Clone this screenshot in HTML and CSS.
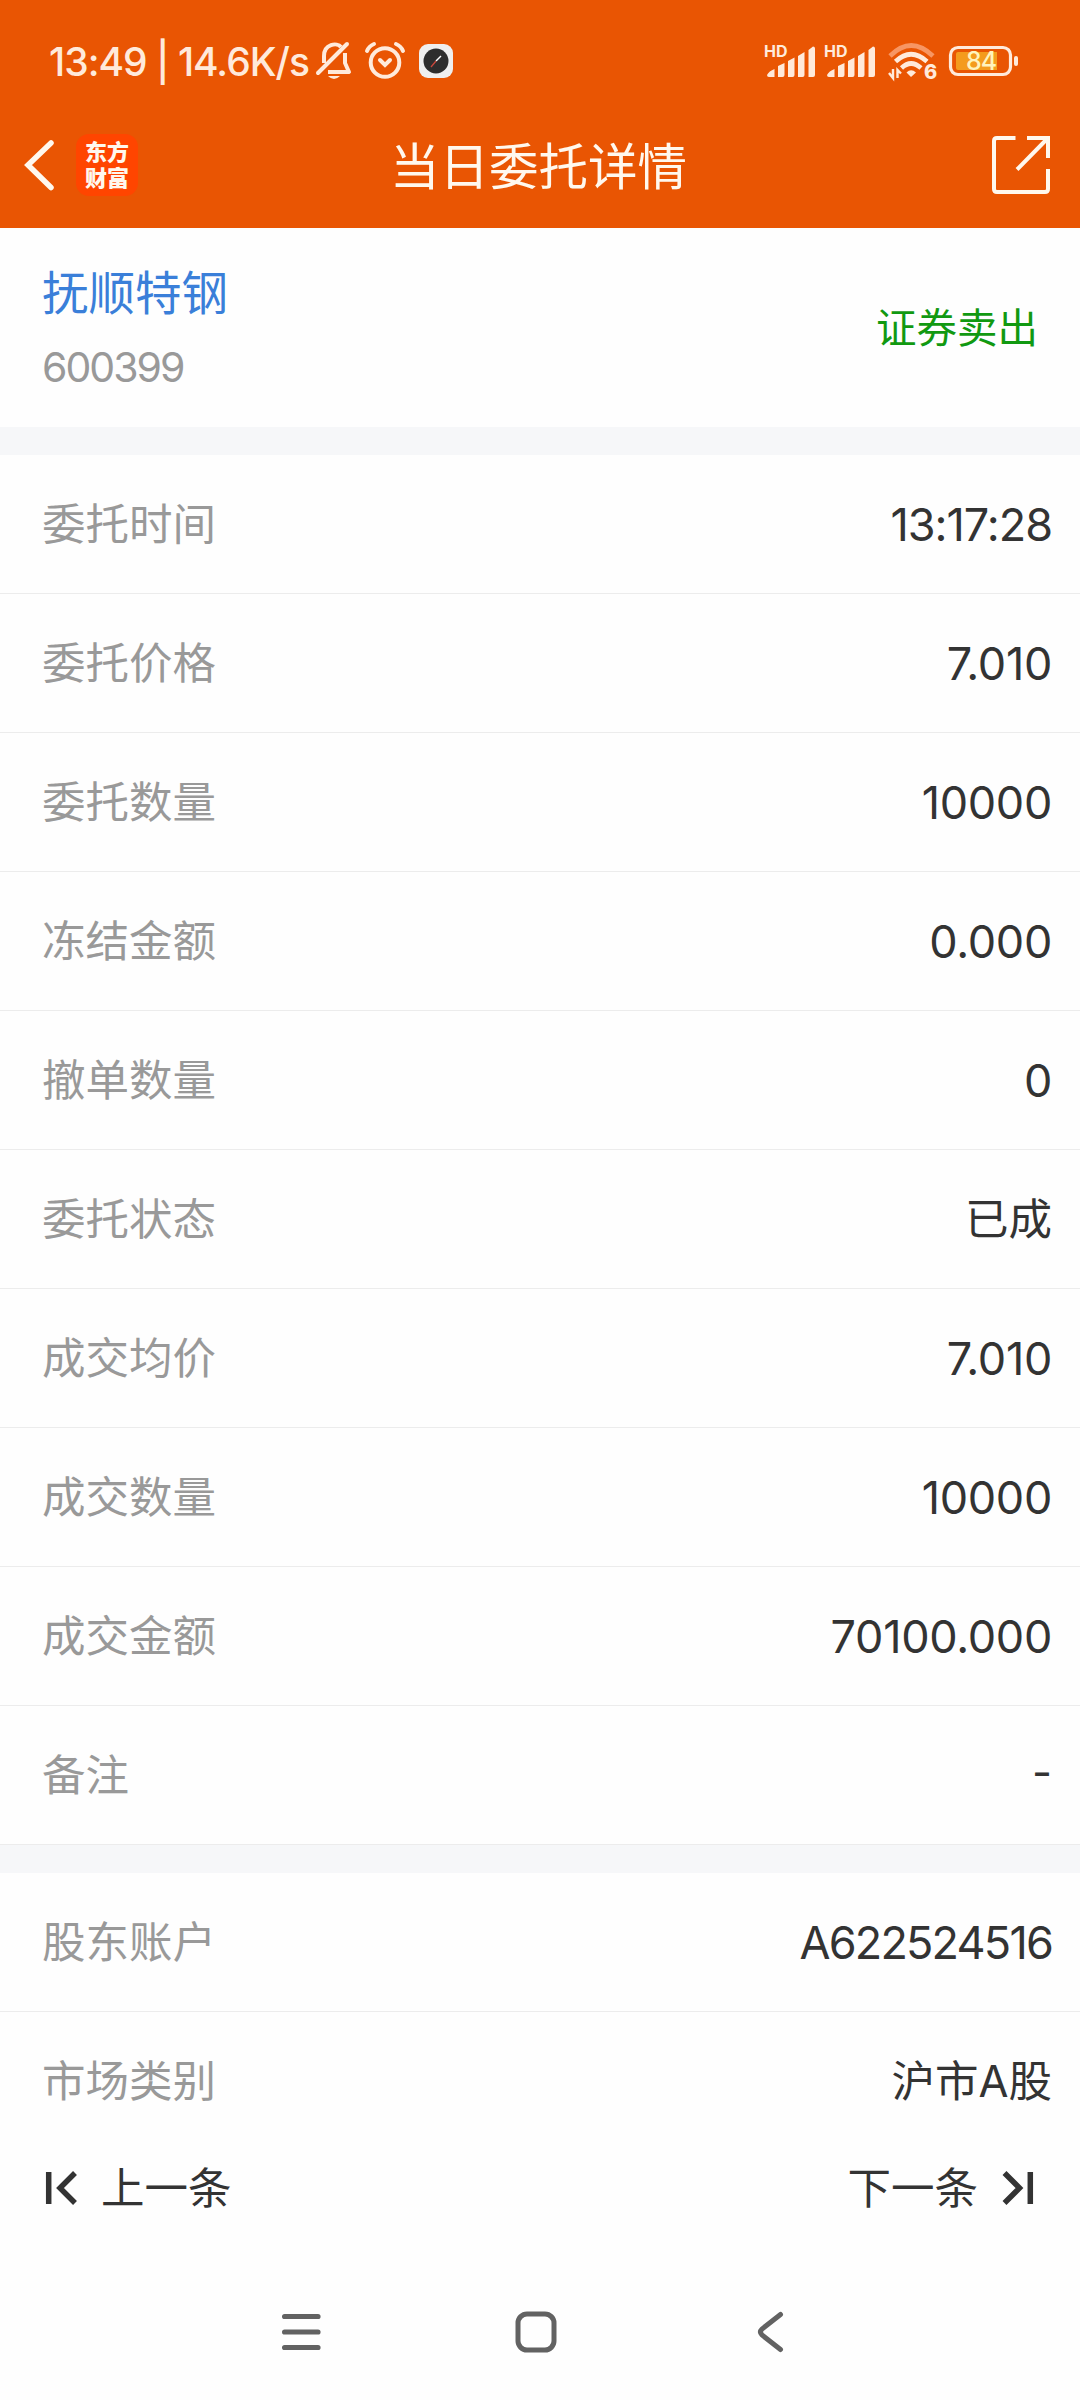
FILE: index.html
```html
<!DOCTYPE html>
<html lang="zh-CN">
<head>
    <meta charset="UTF-8">
    <meta name="viewport" content="width=device-width, initial-scale=1.0">
    <title>当日委托详情</title>
    <link rel="stylesheet" href="styles.css">
</head>
<body>
    <header class="header">
        <div class="status-bar">
            <span class="status-text">13:49 | 14.6K/s</span>
            <svg class="bell" width="36" height="38" viewBox="0 0 36 38" fill="none" stroke="#ffeadb" stroke-width="4">
                <path d="M8 21V14C8 2 21 0 25 5M29 11V21L33 30H12" stroke-linejoin="round"/>
                <path d="M2 31L31 2" stroke-linecap="round"/>
                <path d="M12 34H24Q18 40 12 34Z" fill="#ffeadb" stroke="none"/>
            </svg>
            <svg class="alarm" width="40" height="38" viewBox="0 0 40 38" fill="none" stroke="#ffeadb" stroke-width="4" stroke-linecap="round">
                <circle cx="20" cy="20.500" r="14.300"/>
                <path d="M2 9Q4 4 9 2M31 2Q36 4 38 9M15 18L20 23L25 18"/>
            </svg>
            <svg class="compass" width="34" height="34" viewBox="0 0 34 34">
                <rect width="34" height="34" rx="9" fill="#efefef"/>
                <circle cx="17" cy="17" r="12.500" fill="#2d2d2d"/>
                <path d="M17 17L22 12" stroke="#fff" stroke-width="1.500"/>
                <path d="M17 17L12 23" stroke="#c9473c" stroke-width="1.300"/>
            </svg>
            <div class="status-right">
                <svg class="signal" width="50" height="34" viewBox="0 0 50 34" fill="#ffeadb">
                    <text x="-1" y="13">HD</text>
                    <path d="M2 31Q4 27 9.500 25V33H4Q2 33 2 31ZM13 22L19.500 19V31Q19.500 33 17.500 33H13ZM23 17L29.500 13.500V31Q29.500 33 27.500 33H23ZM33 12L39.500 8V31Q39.500 33 37.500 33H33ZM43.500 6L48 2.500Q50 2.500 50 4.500V31Q50 33 48 33H43.500Z"/>
                </svg>
                <svg class="signal" width="50" height="34" viewBox="0 0 50 34" fill="#ffeadb">
                    <text x="-1" y="13">HD</text>
                    <path d="M2 31Q4 27 9.500 25V33H4Q2 33 2 31ZM13 22L19.500 19V31Q19.500 33 17.500 33H13ZM23 17L29.500 13.500V31Q29.500 33 27.500 33H23ZM33 12L39.500 8V31Q39.500 33 37.500 33H33ZM43.500 6L48 2.500Q50 2.500 50 4.500V31Q50 33 48 33H43.500Z"/>
                </svg>
                <svg class="wifi" width="48" height="36" viewBox="0 0 48 36" fill="none" stroke="#ffeadb" stroke-width="4.600">
                    <path d="M2 13Q23 -8 45 13" stroke="#f79663"/>
                    <path d="M7.500 18.500Q23 4 39 18.500M13.500 25Q23 16 33 25"/>
                    <path d="M18.500 29.500Q23 25 28 29.500L23 34Z" fill="#ffeadb" stroke="none"/>
                    <path d="M5 26V35L1 30M9.500 35V27L13 30.500" stroke-width="2.400"/>
                    <text x="36" y="35.500" fill="#ffeadb" stroke="none">6</text>
                </svg>
                <svg class="battery" width="70" height="32" viewBox="0 0 70 32">
                    <rect x="1.500" y="2.500" width="60" height="27" rx="7.500" fill="none" stroke="#ffeadb" stroke-width="3.200"/>
                    <path d="M9 7H48V25H9Q7 25 7 23V9Q7 7 9 7Z" fill="#f49b1d"/>
                    <rect x="65" y="11" width="4" height="10" rx="2" fill="#ffeadb"/>
                    <text x="17" y="25" fill="#fff3bd">84</text>
                </svg>
            </div>
        </div>
        <div class="title-bar">
            <div class="title-left">
                <svg width="30" height="50" viewBox="0 0 30 50" fill="none" stroke="#fff8ee" stroke-width="5.500" stroke-linecap="round">
                    <path d="M26 3L3 25L26 47.500"/>
                </svg>
                <div class="logo">东方<br>财富</div>
            </div>
            <h1>当日委托详情</h1>
            <svg class="share" width="58" height="58" viewBox="0 0 58 58" fill="none" stroke="#fff8ee" stroke-width="4">
                <path d="M23.500 2H5Q2 2 2 5V53Q2 56 5 56H53Q56 56 56 53V33M35 2H56V22M25 33.500L55 3"/>
            </svg>
        </div>
    </header>

    <section class="stock">
        <div>
            <div class="stock-name">抚顺特钢</div>
            <div class="stock-code">600399</div>
        </div>
        <div class="side">证券卖出</div>
    </section>

    <section class="list">
        <div class="row"><span>委托时间</span><b class="time">13:17:28</b></div>
        <div class="row"><span>委托价格</span><b>7.010</b></div>
        <div class="row"><span>委托数量</span><b>10000</b></div>
        <div class="row"><span>冻结金额</span><b>0.000</b></div>
        <div class="row"><span>撤单数量</span><b>0</b></div>
        <div class="row"><span>委托状态</span><b class="text">已成</b></div>
        <div class="row"><span>成交均价</span><b>7.010</b></div>
        <div class="row"><span>成交数量</span><b>10000</b></div>
        <div class="row"><span>成交金额</span><b>70100.000</b></div>
        <div class="row"><span>备注</span><b class="text">-</b></div>
    </section>

    <section class="list">
        <div class="row"><span>股东账户</span><b class="account">A622524516</b></div>
        <div class="row"><span>市场类别</span><b class="text">沪市A股</b></div>
    </section>

    <div class="pager">
        <div class="pager-item">
            <svg width="32" height="34" viewBox="0 0 32 34" fill="none" stroke="#333" stroke-width="5.500">
                <path d="M3.700 1V33M30 2L15 17L30 32"/>
            </svg>
            <span>上一条</span>
        </div>
        <div class="pager-item">
            <span>下一条</span>
            <svg width="32" height="34" viewBox="0 0 32 34" fill="none" stroke="#333" stroke-width="5.500">
                <path d="M28.300 1V33M2.500 2L17.500 17L2.500 32"/>
            </svg>
        </div>
    </div>

    <nav class="system-nav">
        <svg width="42" height="42" viewBox="0 0 42 42" fill="none" stroke="#626262" stroke-width="5.200" stroke-linecap="round">
            <path d="M4.600 5.500H38M4.600 21H38M4.600 36.500H38"/>
        </svg>
        <svg width="42" height="42" viewBox="0 0 42 42" fill="none" stroke="#626262" stroke-width="5">
            <rect x="3" y="3" width="36" height="36" rx="9"/>
        </svg>
        <svg width="42" height="42" viewBox="0 0 42 42" fill="none" stroke="#626262" stroke-width="5" stroke-linecap="round">
            <path d="M30.500 3.500L12 18Q9 21 12 24L30.500 38.500"/>
        </svg>
    </nav>
</body>
</html>
```

FILE: styles.css
```css
* {
    box-sizing: border-box;
}
body {
    margin: 0;
    height: 2400px;
    background: #fefefe;
    color: #333;
    font-family: Inter, "Noto Sans CJK SC", sans-serif;
    font-size: 44px;
    overflow: hidden;
}
svg {
    display: block;
    flex: none;
    overflow: visible;
}
.header {
    height: 228px;
    background: #e95503;
    color: #fff8ee;
}
.status-bar {
    display: flex;
    align-items: center;
    height: 122px;
    padding: 0 61px 0 49px;
}
.status-text {
    width: 267px;
    color: #ffeadb;
    font-size: 39px;
    font-weight: 500;
    letter-spacing: -1px;
    white-space: nowrap;
}
.alarm {
    margin-left: 13px;
}
.compass {
    margin-left: 14px;
}
.status-right {
    display: flex;
    align-items: center;
    margin-left: auto;
}
.signal {
    margin-right: 10px;
    font-size: 16px;
    font-weight: 700;
}
.wifi {
    margin: 0 13px 0 3px;
    font-size: 20px;
    font-weight: 800;
}
.battery {
    font-size: 25px;
    font-weight: 500;
    letter-spacing: -1px;
}
.title-bar {
    display: flex;
    align-items: center;
    justify-content: space-between;
    height: 86px;
    padding: 0 30px 0 25px;
}
.title-left {
    display: flex;
    align-items: center;
    gap: 21px;
    width: 170px;
}
.logo {
    width: 62px;
    height: 62px;
    padding: 5px 0;
    border-radius: 13px;
    background: #ff4500;
    font-size: 22px;
    font-weight: 900;
    line-height: 26px;
    text-align: center;
}
h1 {
    margin: 0;
    padding-top: 3px;
    font-size: 49.500px;
    font-weight: 400;
    line-height: 60px;
}
.share {
    margin-left: 110px;
}
.stock {
    display: flex;
    align-items: center;
    justify-content: space-between;
    height: 199px;
    padding: 0 42px 0 42px;
}
.stock-name {
    padding-top: 5px;
    color: #3a7fd9;
    font-size: 46.500px;
    line-height: 70px;
}
.stock-code {
    margin-top: 4px;
    color: #999;
    font-size: 41px;
    line-height: 70px;
    letter-spacing: -2px;
}
.side {
    padding-bottom: 5px;
    color: #119911;
    font-size: 40.500px;
}
.list {
    border-top: 28px solid #f6f7f9;
}
.row {
    display: flex;
    align-items: center;
    justify-content: space-between;
    height: 139px;
    padding: 0 28px 0 42px;
    border-bottom: 1px solid #ececec;
}
.row span {
    padding-bottom: 6px;
    color: #999;
    font-size: 43.500px;
}
.row b {
    font-size: 45px;
    font-weight: 400;
    letter-spacing: -0.3px;
}
.row .time {
    letter-spacing: -1px;
}
.row .account {
    letter-spacing: -1.8px;
}
.row .text {
    padding-bottom: 6px;
    font-size: 43.500px;
    letter-spacing: 0;
}
.list:nth-of-type(3) .row:last-child {
    height: 138px;
    border-bottom: none;
}
.pager {
    display: flex;
    align-items: center;
    justify-content: space-between;
    height: 76px;
    padding: 0 46px 0 45px;
}
.pager-item {
    display: flex;
    align-items: center;
    gap: 24px;
}
.pager-item span {
    padding-bottom: 6px;
    font-size: 43.500px;
}
.system-nav {
    display: flex;
    justify-content: space-between;
    align-items: center;
    height: 212px;
    padding: 0 288px 0 280px;
}
```
